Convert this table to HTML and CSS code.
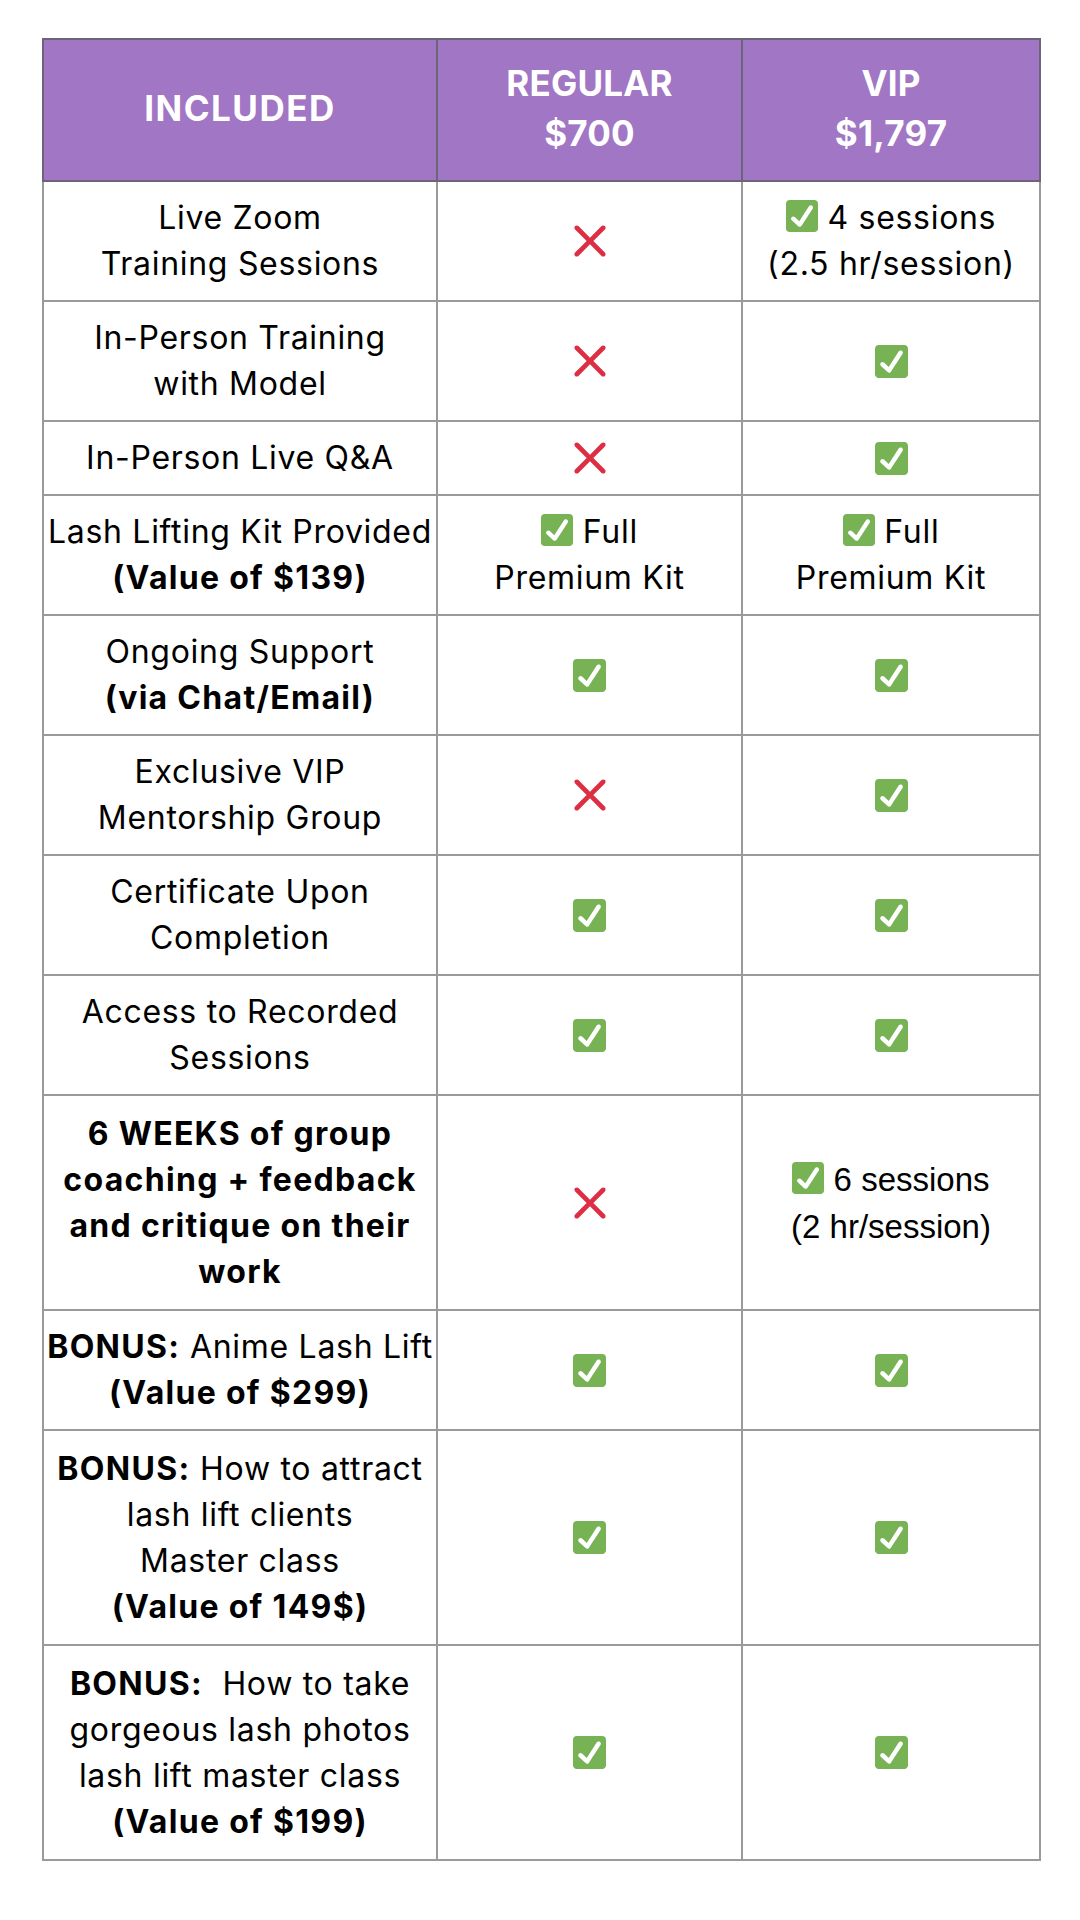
FILE: index.html
```html
<!DOCTYPE html>
<html lang="en">
<head>
<meta charset="utf-8">
<title>Lash Lift Course Comparison</title>
<link rel="stylesheet" href="styles.css">
</head>
<body>
<svg width="0" height="0" class="defs" aria-hidden="true">
  <defs>
    <symbol id="ok" viewBox="0 0 36 36">
      <path fill="#77B255" d="M36 32c0 2.209-1.791 4-4 4H4c-2.209 0-4-1.791-4-4V4c0-2.209 1.791-4 4-4h28c2.209 0 4 1.791 4 4v28z"/>
      <path fill="#FFF" d="M29.28 6.362c-1.156-.751-2.704-.422-3.458.736L14.936 23.877l-5.029-4.65c-1.014-.938-2.596-.875-3.533.139-.937 1.014-.875 2.596.139 3.533l7.209 6.666c.48.445 1.09.665 1.696.665.673 0 1.534-.282 2.099-1.139.332-.506 12.5-19.270 12.5-19.270.751-1.159.421-2.707-.736-3.458z"/>
    </symbol>
    <symbol id="no" viewBox="0 0 36 36">
      <path fill="#DD2E44" d="M21.533 18.002L33.768 5.768c.976-.977.976-2.559 0-3.535-.977-.977-2.559-.977-3.535 0L17.998 14.467 5.764 2.233c-.976-.977-2.560-.977-3.535 0-.977.976-.977 2.558 0 3.535l12.234 12.234L2.201 30.265c-.977.977-.977 2.559 0 3.535.488.488 1.128.732 1.768.732s1.280-.244 1.768-.732l12.262-12.263 12.234 12.234c.488.488 1.128.732 1.768.732.640 0 1.279-.244 1.768-.732.976-.977.976-2.558 0-3.535L21.533 18.002z"/>
    </symbol>
  </defs>
</svg>
<main class="page">
<table class="compare">
  <colgroup>
    <col class="c1"><col class="c2"><col class="c3">
  </colgroup>
  <thead>
    <tr>
      <th class="inc">INCLUDED</th>
      <th>REGULAR<br>$700</th>
      <th>VIP<br>$1,797</th>
    </tr>
  </thead>
  <tbody>
    <tr>
      <td>Live Zoom<br>Training Sessions</td>
      <td><svg class="ic no"><use href="#no"/></svg></td>
      <td><svg class="ic inl"><use href="#ok"/></svg> 4 sessions<br>(2.5 hr/session)</td>
    </tr>
    <tr>
      <td>In-Person Training<br>with Model</td>
      <td><svg class="ic no"><use href="#no"/></svg></td>
      <td><svg class="ic"><use href="#ok"/></svg></td>
    </tr>
    <tr>
      <td>In-Person Live Q&amp;A</td>
      <td><svg class="ic no"><use href="#no"/></svg></td>
      <td><svg class="ic"><use href="#ok"/></svg></td>
    </tr>
    <tr>
      <td>Lash Lifting Kit Provided<br><b>(Value of $139)</b></td>
      <td><svg class="ic inl"><use href="#ok"/></svg> Full<br>Premium Kit</td>
      <td><svg class="ic inl"><use href="#ok"/></svg> Full<br>Premium Kit</td>
    </tr>
    <tr>
      <td>Ongoing Support<br><b>(via Chat/Email)</b></td>
      <td><svg class="ic"><use href="#ok"/></svg></td>
      <td><svg class="ic"><use href="#ok"/></svg></td>
    </tr>
    <tr>
      <td>Exclusive VIP<br>Mentorship Group</td>
      <td><svg class="ic no"><use href="#no"/></svg></td>
      <td><svg class="ic"><use href="#ok"/></svg></td>
    </tr>
    <tr>
      <td>Certificate Upon<br>Completion</td>
      <td><svg class="ic"><use href="#ok"/></svg></td>
      <td><svg class="ic"><use href="#ok"/></svg></td>
    </tr>
    <tr>
      <td>Access to Recorded<br>Sessions</td>
      <td><svg class="ic"><use href="#ok"/></svg></td>
      <td><svg class="ic"><use href="#ok"/></svg></td>
    </tr>
    <tr class="tall">
      <td class="strong">6 WEEKS of group<br>coaching + feedback<br>and critique on their<br>work</td>
      <td><svg class="ic no"><use href="#no"/></svg></td>
      <td class="arial"><svg class="ic inl"><use href="#ok"/></svg> 6 sessions<br>(2 hr/session)</td>
    </tr>
    <tr>
      <td><b>BONUS:</b> Anime Lash Lift<br><b>(Value of $299)</b></td>
      <td><svg class="ic"><use href="#ok"/></svg></td>
      <td><svg class="ic"><use href="#ok"/></svg></td>
    </tr>
    <tr class="tall">
      <td><b>BONUS:</b> How to attract<br>lash lift clients<br>Master class<br><b>(Value of 149$)</b></td>
      <td><svg class="ic"><use href="#ok"/></svg></td>
      <td><svg class="ic"><use href="#ok"/></svg></td>
    </tr>
    <tr class="tall">
      <td><b>BONUS:</b>&nbsp; How to take<br>gorgeous lash photos<br>lash lift master class<br><b>(Value of $199)</b></td>
      <td><svg class="ic"><use href="#ok"/></svg></td>
      <td><svg class="ic"><use href="#ok"/></svg></td>
    </tr>
  </tbody>
</table>
</main>
</body>
</html>
```
FILE: styles.css
```css
html, body {
  margin: 0;
  padding: 0;
  background: #ffffff;
}

.defs {
  position: absolute;
  width: 0;
  height: 0;
  overflow: hidden;
}

.page {
  padding: 38px 0 0 42px;
}

.compare {
  border-collapse: collapse;
  table-layout: fixed;
  width: 997px;
  font-family: "Inter", "Noto Sans", sans-serif;
  color: #000;
}

.c1 { width: 394px; }
.c2 { width: 305px; }
.c3 { width: 298px; }

.compare th {
  background: #a176c4;
  color: #ffffff;
  font-weight: 700;
  font-size: 35px;
  line-height: 50px;
  height: 142px;
  padding: 0 0 5px;
  text-align: center;
  vertical-align: middle;
  border: 2px solid #6e6478;
  box-sizing: border-box;
  letter-spacing: 0.2px;
}

.compare th.inc {
  letter-spacing: 1.5px;
}

.compare td {
  font-size: 32px;
  line-height: 46px;
  letter-spacing: 0.7px;
  font-weight: 400;
  text-align: center;
  vertical-align: middle;
  padding: 13px 0;
  border: 2px solid #9a9a9a;
  white-space: nowrap;
}

.compare td + td {
  border-left-color: #858585;
}

.compare b,
.compare .strong {
  font-weight: 700;
  letter-spacing: 1.3px;
}

.compare tr.tall td {
  height: 215px;
  padding: 0;
  box-sizing: border-box;
}

.compare .arial {
  font-family: "Liberation Sans", Arial, sans-serif;
  font-size: 33px;
  line-height: 47px;
  letter-spacing: 0;
}

.ic {
  width: 33px;
  height: 33px;
  display: block;
  margin: 0 auto;
}

.ic.no {
  width: 34px;
  height: 34px;
}

.ic.inl {
  display: inline-block;
  width: 32px;
  height: 32px;
  vertical-align: -3px;
  margin: 0;
}
```
